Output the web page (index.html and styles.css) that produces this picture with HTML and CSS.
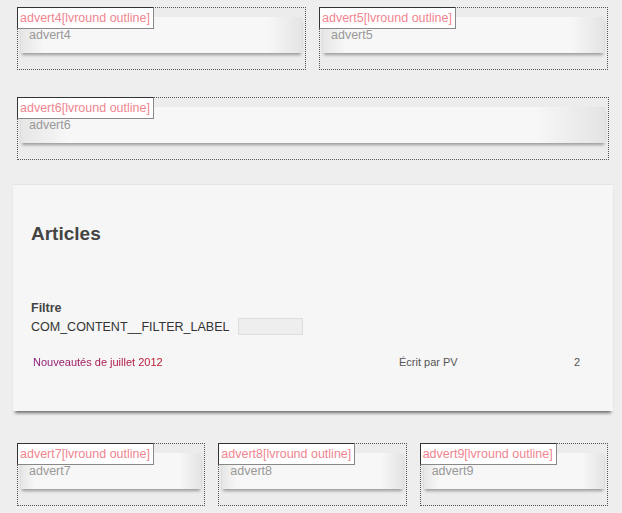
FILE: index.html
```html
<!DOCTYPE html>
<html lang="fr">
<head>
  <meta charset="UTF-8">
  <title>Articles</title>
  <link rel="stylesheet" href="styles.css">
</head>
<body>
  <div class="page">
    <div class="row row-2">
      <div class="advert">
        <div class="pos-label">advert4[lvround outline]</div>
        <div class="module">advert4</div>
      </div>
      <div class="advert">
        <div class="pos-label">advert5[lvround outline]</div>
        <div class="module">advert5</div>
      </div>
    </div>

    <div class="row row-wide">
      <div class="advert">
        <div class="pos-label">advert6[lvround outline]</div>
        <div class="module">advert6</div>
      </div>
    </div>

    <div class="panel">
      <h2>Articles</h2>
      <div class="filter">
        <div class="filter-title">Filtre</div>
        <div class="filter-line">
          <span>COM_CONTENT__FILTER_LABEL</span>
          <input type="text" class="filter-input">
        </div>
      </div>
      <div class="list-row">
        <a class="title" href="#">Nouveautés de juillet 2012</a>
        <span class="author">Écrit par PV</span>
        <span class="hits">2</span>
      </div>
    </div>

    <div class="row row-3">
      <div class="advert">
        <div class="pos-label">advert7[lvround outline]</div>
        <div class="module">advert7</div>
      </div>
      <div class="advert">
        <div class="pos-label">advert8[lvround outline]</div>
        <div class="module">advert8</div>
      </div>
      <div class="advert">
        <div class="pos-label">advert9[lvround outline]</div>
        <div class="module">advert9</div>
      </div>
    </div>
  </div>
</body>
</html>
```

FILE: styles.css
```css
body {
  margin: 0;
  background-color: #eeeeee;
  font-family: "Liberation Sans", Arial, sans-serif;
  font-size: 12.5px;
  color: #333;
}
.page {
  width: 600px;
  margin-left: 13px;
  padding-top: 7px;
}
.row {
  display: grid;
  grid-template-columns: 1fr;
  gap: 13px;
  padding: 0 4px;
  margin-bottom: 27px;
}
.row-wide {
  margin-bottom: 24px;
}
.row-2 {
  grid-template-columns: 1fr 1fr;
  padding-right: 5px;
}
.row-3 {
  grid-template-columns: 1fr 1fr 1fr;
  padding-right: 5px;
}
.advert {
  position: relative;
  height: 61px;
  border: 1px dotted #555;
  background-color: #ececec;
}
.pos-label {
  position: absolute;
  top: -1px;
  left: -1px;
  z-index: 2;
  padding: 3px 3px 3px 2px;
  line-height: 14px;
  background-color: #fff;
  border: 1px solid #888;
  border-top-color: #333;
  border-left-color: #333;
  color: #f08590;
}
.module {
  margin: 9px 3px 0 3px;
  height: 25px;
  padding: 11px 0 0 8px;
  line-height: 14px;
  color: #999;
  background: linear-gradient(to right, #e6e6e6, #f7f7f7 8%, #f7f7f7 88%, #e4e4e4);
  box-shadow: 0 3px 3px -1px rgba(0, 0, 0, 0.35);
}
.panel {
  height: 227px;
  margin-bottom: 32px;
  padding: 0 18px;
  background-color: #f6f6f6;
  border-top: 1px solid #e4e4e4;
  box-shadow: 0 4px 3px -2px rgba(0, 0, 0, 0.55);
  box-sizing: border-box;
}
.panel h2 {
  margin: 0;
  padding-top: 38px;
  font-size: 19px;
  line-height: 22px;
  color: #444;
}
.filter {
  margin-top: 56px;
}
.filter-title {
  font-weight: bold;
  color: #444;
  line-height: 14px;
}
.filter-line {
  display: flex;
  align-items: center;
  gap: 9px;
  margin-top: 3px;
}
.filter-input {
  width: 63px;
  height: 15px;
  margin: 0;
  padding: 0;
  border: 1px solid #ddd;
  background-color: #eeeeee;
}
.list-row {
  display: grid;
  grid-template-columns: 366px 175px 1fr;
  margin-top: 20px;
  padding-left: 2px;
  line-height: 14px;
  font-size: 11px;
}
.title {
  justify-self: start;
  text-decoration: none;
  background: linear-gradient(to right, #8a1a7e, #c0162a);
  -webkit-background-clip: text;
  background-clip: text;
  color: transparent;
}
.author {
  color: #555;
}
.hits {
  color: #555;
}
```
